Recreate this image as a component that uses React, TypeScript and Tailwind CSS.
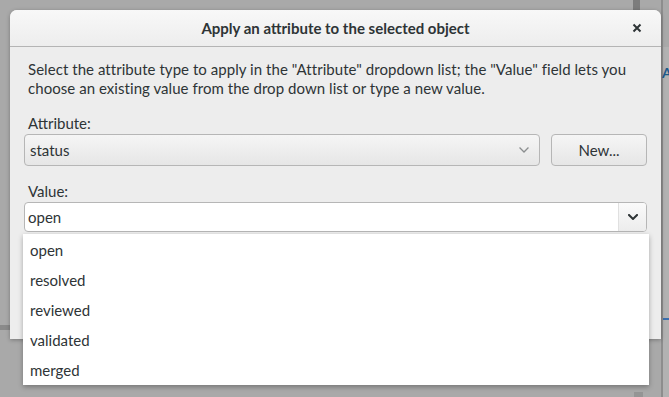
import React from "react";

function Chevron({ className, strokeWidth = 1.5 }: { className?: string; strokeWidth?: number }) {
  return (
    <svg width="10" height="6" viewBox="0 0 10 6" className={className} fill="none">
      <path d="M1 1 L5 5 L9 1" stroke="currentColor" strokeWidth={strokeWidth} strokeLinecap="square" />
    </svg>
  );
}

export default function App() {
  const items = ["open", "resolved", "reviewed", "validated", "merged"];
  return (
    <div className="relative w-[669px] h-[397px] overflow-hidden bg-[#a9a9a9] font-['Lato','Noto_Sans',sans-serif] text-[15px] text-[#2e3436]">
      {/* background window fragments */}
      <div className="absolute left-[633px] top-0 w-[7px] h-[10px] bg-[#7c7c7c]" />
      <div className="absolute left-[661px] top-0 w-[2px] h-full bg-[#8d8d8d]" />
      <div className="absolute left-[663px] top-[47px] w-[6px] h-[350px] bg-[#b2b2b2]" />
      <div className="absolute left-[662px] top-[64px] w-[7px] overflow-hidden text-[14px] font-bold leading-[18px] text-[#1d5a8a]">A</div>
      <div className="absolute left-[663px] top-[318px] w-[6px] h-[2px] bg-[#3b6fae]" />
      <div className="absolute left-0 top-[325px] w-[10px] h-[5px] bg-[#8a8a8a]" />
      <div className="absolute left-[634px] top-[392px] w-[9px] h-[5px] bg-[#959595]" />

      {/* dialog */}
      <div className="absolute left-[10px] top-[10px] w-[651px] h-[329px] flex flex-col rounded-t-[7px] bg-[#ededed] shadow-[0_1px_4px_rgba(0,0,0,0.3)]">
        <div className="h-[37px] flex items-center rounded-t-[7px] border-b border-[#b4b4b4] bg-gradient-to-b from-[#f8f8f8] to-[#ededed]">
          <div className="w-[48px]" />
          <div className="flex-1 text-center font-bold leading-[19px]">Apply an attribute to the selected object</div>
          <div className="w-[48px] flex items-center justify-center">
            <svg width="10" height="10" viewBox="0 0 10 10">
              <path d="M1.5 1.5 L8.5 8.5 M8.5 1.5 L1.5 8.5" stroke="#2e3436" strokeWidth="2" />
            </svg>
          </div>
        </div>

        <div className="flex flex-col px-[14px] pt-[13px]">
          <p className="pl-[4px] leading-[19px] tracking-[0.05px]">
            Select the attribute type to apply in the "Attribute" dropdown list; the "Value" field lets you
            <br />
            choose an existing value from the drop down list or type a new value.
          </p>

          <div className="mt-[16px] pl-[4px] leading-[19px]">Attribute:</div>
          <div className="mt-[1px] flex gap-[11px]">
            <div className="flex-1 h-[32px] flex items-center justify-between pl-[5px] pr-[10px] rounded-[4px] border border-[#b6b6b6] bg-gradient-to-b from-[#f5f5f5] to-[#e6e6e6]">
              <span>status</span>
              <Chevron className="text-[#8b8e8f]" strokeWidth={1.3} />
            </div>
            <div className="w-[96px] h-[32px] flex items-center justify-center rounded-[4px] border border-[#b6b6b6] bg-gradient-to-b from-[#f5f5f5] to-[#e6e6e6]">
              New...
            </div>
          </div>

          <div className="mt-[16px] pl-[4px] leading-[19px]">Value:</div>
          <div className="mt-[1px] h-[30px] flex rounded-[4px] border border-[#b6b6b6] bg-white overflow-hidden">
            <div className="flex-1 flex items-center pl-[3px] pt-[1px]">open</div>
            <div className="w-[28px] flex items-center justify-center border-l border-[#e0e0e0] bg-gradient-to-b from-[#fafafa] to-[#ececec]">
              <Chevron className="text-[#2e3436]" strokeWidth={2} />
            </div>
          </div>
        </div>
      </div>

      {/* popup list */}
      <div className="absolute left-[23px] top-[234px] w-[626px] h-[151px] bg-white pt-[1px] shadow-[0_2px_5px_rgba(0,0,0,0.3)]">
        {items.map((it) => (
          <div key={it} className="h-[30px] flex items-center pl-[7px]">
            {it}
          </div>
        ))}
      </div>
    </div>
  );
}
